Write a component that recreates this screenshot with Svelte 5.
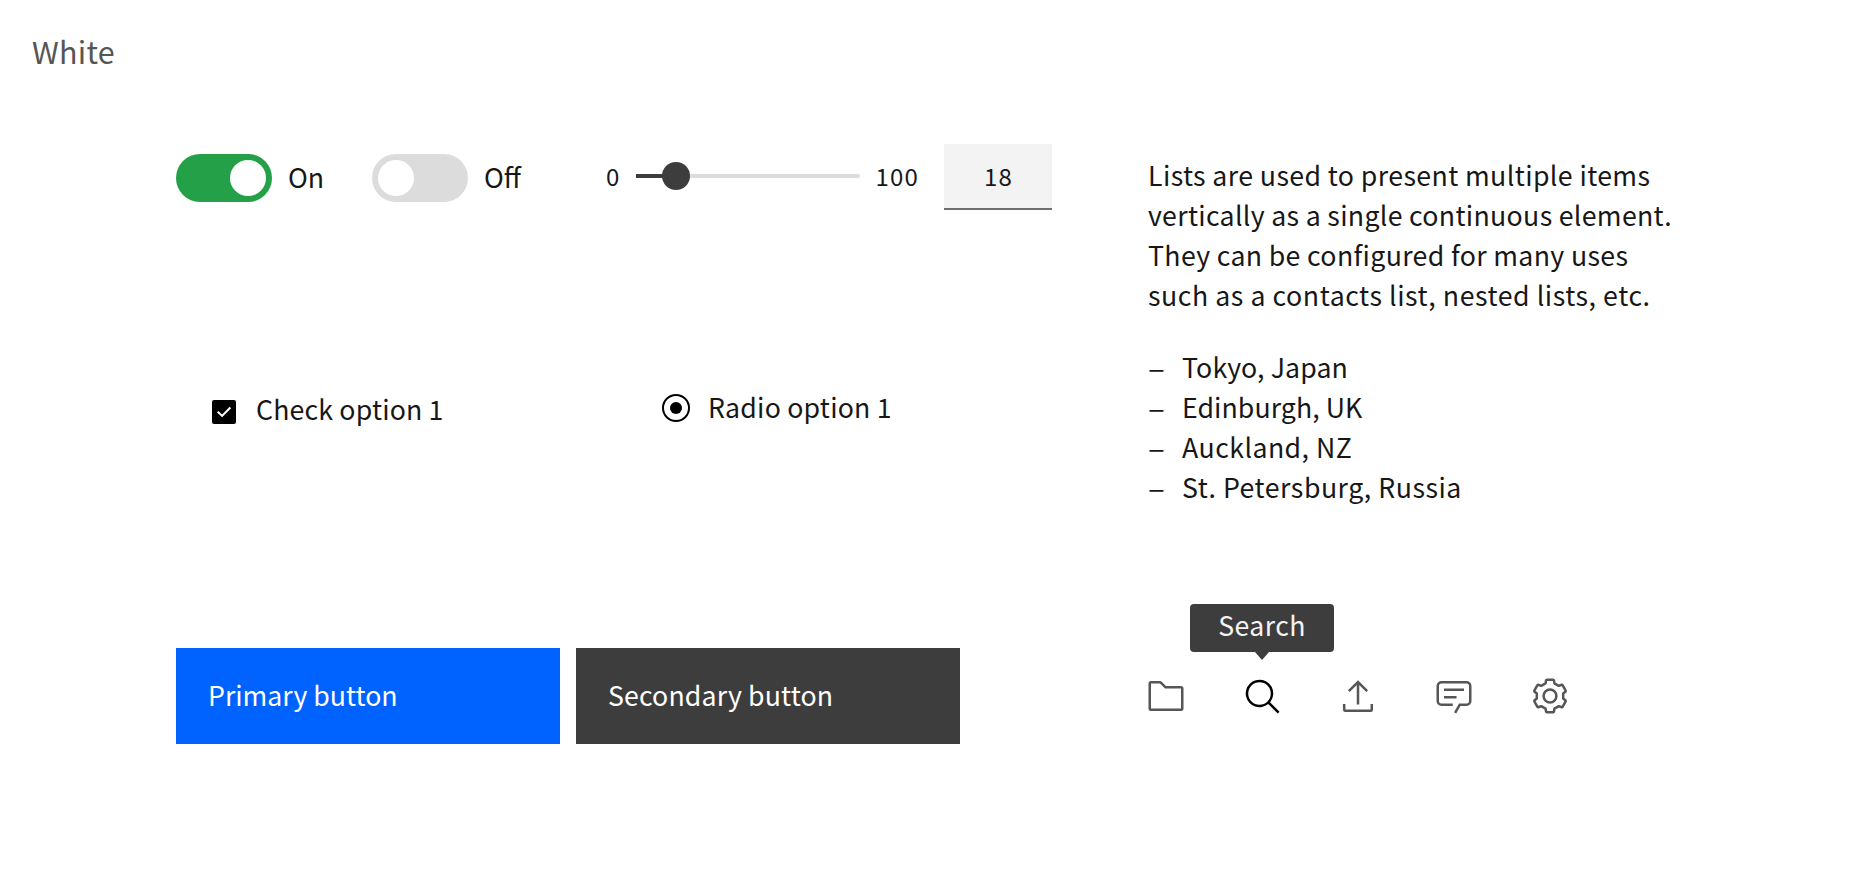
<script>
  const paragraph = [
    { text: 'Lists are used to present multiple items', ls: 0.4 },
    { text: 'vertically as a single continuous element.', ls: 0.32 },
    { text: 'They can be configured for many uses', ls: 0.35 },
    { text: 'such as a contacts list, nested lists, etc.', ls: 0.56 }
  ];
  const places = [
    { text: 'Tokyo, Japan', ls: 0.1 },
    { text: 'Edinburgh, UK', ls: 0.07 },
    { text: 'Auckland, NZ', ls: 0.45 },
    { text: 'St. Petersburg, Russia', ls: 0.52 }
  ];
  // Outline of one gear tooth, repeated every 60 degrees around the centre.
  const tooth = [[-4.43, -12.7], [-3.9, -15.7], [-3.1, -16.3], [3.1, -16.3], [3.9, -15.7], [4.43, -12.7]];
  const gear = [0, 1, 2, 3, 4, 5]
    .flatMap((k) => {
      const c = Math.cos((k * Math.PI) / 3);
      const s = Math.sin((k * Math.PI) / 3);
      return tooth.map(([x, y]) => `${(20 + x * c - y * s).toFixed(2)},${(20 + x * s + y * c).toFixed(2)}`);
    })
    .join(' ');
</script>

<div class="page">
  <header>White</header>
  <main>
    <section class="controls">
      <div class="row inputs">
        <div class="toggle on"><i></i></div><span class="on-label">On</span>
        <div class="toggle"><i></i></div><span class="off-label">Off</span>
        <span class="num min">0</span>
        <div class="track"><b></b></div>
        <span class="num max">100</span>
        <div class="field num">18</div>
      </div>
      <div class="row options">
        <svg class="check" width="24" height="24" viewBox="0 0 24 24"><rect width="24" height="24" rx="2" fill="#000" /><path d="M5.7 11.7l4.4 4.2 8.3-8.3" fill="none" stroke="#fff" stroke-width="2.1" /></svg>
        <span class="check-label">Check option 1</span>
        <svg class="radio" width="28" height="28" viewBox="0 0 28 28"><circle cx="14" cy="14" r="13" fill="none" stroke="#000" stroke-width="2" /><circle cx="14" cy="14" r="6" /></svg>
        <span class="radio-label">Radio option 1</span>
      </div>
      <div class="row buttons">
        <button class="primary">Primary button</button>
        <button class="secondary">Secondary button</button>
      </div>
    </section>
    <section class="content">
      <p>{#each paragraph as l}<span style:letter-spacing="{l.ls}px">{l.text}</span>{/each}</p>
      <ul>{#each places as l}<li><em>–</em><span style:letter-spacing="{l.ls}px">{l.text}</span></li>{/each}</ul>
      <nav>
        <svg viewBox="0 0 32 32"><path d="M11.17,6l3.42,3.41.58.59H28V26H4V6h7.17m0-2H4A2,2,0,0,0,2,6V26a2,2,0,0,0,2,2H28a2,2,0,0,0,2-2V10a2,2,0,0,0-2-2H16L12.59,4.59A2,2,0,0,0,11.17,4Z" /></svg>
        <div class="tip-anchor">
          <svg class="active" viewBox="0 0 32 32"><path d="M30,28.59,22.45,21A11,11,0,1,0,21,22.45L28.59,30ZM5,14a9,9,0,1,1,9,9A9,9,0,0,1,5,14Z" /></svg>
          <div class="tooltip">Search</div>
        </div>
        <svg viewBox="0 0 40 40"><path d="M20 28.5V6M10.8 15.2L20 6l9.2 9.2M6.2 28v5.7a1 1 0 0 0 1 1h25.6a1 1 0 0 0 1-1V28" fill="none" stroke="#565656" stroke-width="2.5" /></svg>
        <svg viewBox="0 0 32 32"><path d="M17.74,30,16,29l4-7h6a2,2,0,0,0,2-2V8a2,2,0,0,0-2-2H6A2,2,0,0,0,4,8V20a2,2,0,0,0,2,2h9v2H6a4,4,0,0,1-4-4V8A4,4,0,0,1,6,4H26a4,4,0,0,1,4,4V20a4,4,0,0,1-4,4H21.16Z" /><path d="M8 10H24V12H8zM8 16H18V18H8z" /></svg>
        <svg viewBox="0 0 40 40"><g fill="none" stroke="#565656" stroke-width="2.5" stroke-linejoin="round"><polygon points={gear} /><circle cx="20" cy="20" r="6.4" /></g></svg>
      </nav>
    </section>
  </main>
</div>

<style>
  :global(body) { background: #fff; }
  .page { height: 896px; overflow: hidden; font: 26.7px/40px "Noto Sans CJK SC", sans-serif; color: #171717; }
  header { height: 44px; padding: 29px 0 71px 32px; font-size: 30.5px; letter-spacing: 0.25px; line-height: 44px; color: #565656; }
  main { display: grid; grid-template-columns: 972px 1fr; padding-left: 176px; }
  span { white-space: pre; }
  .row { display: flex; }
  .inputs { height: 66px; align-items: center; }
  .toggle { width: 84px; height: 36px; margin-top: 2px; padding: 6px; border-radius: 24px; background: #dcdcdc; }
  .toggle.on { display: flex; justify-content: flex-end; background: #24a148; }
  .toggle i { display: block; width: 36px; height: 36px; border-radius: 50%; background: #fff; }
  .on-label { width: 84px; padding-left: 16px; }
  .off-label { width: 122px; padding-left: 16px; }
  .num { font-size: 24px; }
  .min { width: 30px; margin-top: -2px; }
  .track { display: flex; align-items: center; width: 224px; height: 4px; margin-top: -2px; border-radius: 0 2px 2px 0; background: linear-gradient(90deg, #3d3d3d 30px, #dcdcdc 30px); }
  .track b { width: 28px; height: 28px; margin-left: 26px; border-radius: 50%; background: #3d3d3d; }
  .max { width: 68.5px; margin-top: -2px; padding-left: 15.5px; letter-spacing: 1.2px; }
  .field { width: 108px; height: 64px; line-height: 64px; text-align: center; text-indent: 1px; letter-spacing: 1.2px; background: #f3f3f3; border-bottom: 2px solid #6f6f6f; }
  .options { margin-top: 178px; height: 40px; padding-left: 36px; }
  .check { margin-top: 12px; }
  .check-label { width: 406px; margin-top: 1px; padding-left: 20px; letter-spacing: 0.17px; }
  .radio { margin-top: 6px; }
  .radio-label { margin-top: -1px; padding-left: 18px; letter-spacing: 0.22px; }
  .buttons { margin-top: 220px; gap: 16px; }
  button { width: 384px; height: 96px; border: 0; padding: 0 0 2px 32px; text-align: left; font: inherit; font-variant-ligatures: none; color: #fff; }
  .primary { background: #0062ff; }
  .secondary { background: #3d3d3d; letter-spacing: 0.14px; }
  p { margin: 11px 0 32px; }
  p span { display: block; }
  ul { margin: 0; padding: 0; list-style: none; }
  li { display: flex; height: 40px; }
  em { width: 34px; font-style: normal; transform: scaleX(1.18); transform-origin: left; }
  nav { display: flex; gap: 56px; margin: 169px 0 0 -2px; }
  svg { display: block; flex: none; fill: #565656; }
  nav svg { width: 40px; height: 40px; }
  svg.active, .radio { fill: #000; }
  .tip-anchor { position: relative; }
  .tooltip { position: absolute; left: -52px; top: -72px; width: 144px; height: 48px; line-height: 42px; border-radius: 4px; text-align: center; letter-spacing: 0.4px; background: #3d3d3d; color: #f3f3f3; }
  .tooltip::after { content: ''; position: absolute; left: 65px; top: 48px; border: 7px solid transparent; border-top: 8px solid #3d3d3d; border-bottom: 0; }
</style>
